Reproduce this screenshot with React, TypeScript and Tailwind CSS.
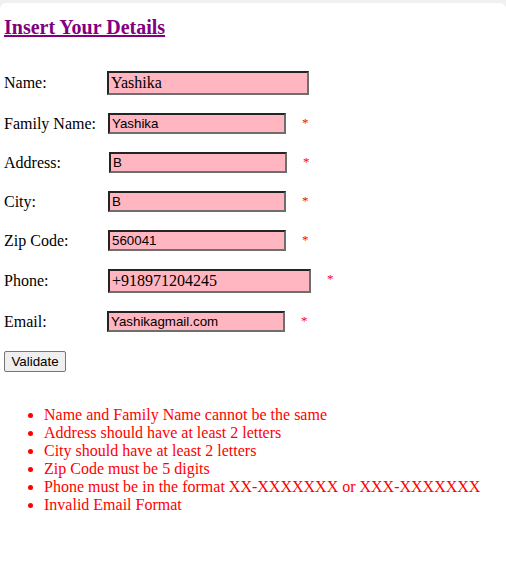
const fields = [
  { label: "Name:", value: "Yashika", serif: true, width: "w-[202px]", shift: "ml-0", star: false },
  { label: "Family Name:", value: "Yashika", serif: false, width: "w-[178px]", shift: "ml-[1px]", star: true },
  { label: "Address:", value: "B", serif: false, width: "w-[178px]", shift: "ml-[2px]", star: true },
  { label: "City:", value: "B", serif: false, width: "w-[178px]", shift: "ml-[1px]", star: true },
  { label: "Zip Code:", value: "560041", serif: false, width: "w-[178px]", shift: "ml-[1px]", star: true },
  { label: "Phone:", value: "+918971204245", serif: true, width: "w-[203px]", shift: "ml-[1px]", star: true },
  { label: "Email:", value: "Yashikagmail.com", serif: false, width: "w-[178px]", shift: "ml-0", star: true },
];

const errors = [
  "Name and Family Name cannot be the same",
  "Address should have at least 2 letters",
  "City should have at least 2 letters",
  "Zip Code must be 5 digits",
  "Phone must be in the format XX-XXXXXXX or XXX-XXXXXXX",
  "Invalid Email Format",
];

const App = () => {
  return (
    <div className="min-h-[561px] bg-[#f0f0f0] pt-[3px] font-['Liberation_Serif',serif]">
      <div className="min-h-[558px] rounded-t-[6px] bg-white pl-[4px] pt-[13px]">
        <h3 className="text-[20px] font-bold leading-[23px] text-[#800080] underline">
          Insert Your Details
        </h3>

        <form className="mt-[32px] flex flex-col gap-[18px]" onSubmit={(e) => e.preventDefault()}>
          {fields.map((f) => (
            <div key={f.label} className="flex items-center">
              <label className="w-[103px] text-[16px] leading-[18px] text-black">{f.label}</label>
              <input
                type="text"
                defaultValue={f.value}
                className={`${f.shift} ${f.width} ${
                  f.serif
                    ? "h-[24px] font-['Liberation_Serif',serif] text-[16px]"
                    : "h-[21px] font-['Liberation_Sans',Arial,sans-serif] text-[13.33px]"
                } border-2 border-t-[#242424] border-l-[#242424] border-r-[#6e6e6e] border-b-[#6e6e6e] bg-[#ffb6c1] px-[2px] py-[1px] text-black outline-none`}
              />
              {f.star && (
                <span className="ml-[16px] self-start mt-[3px] text-[13px] leading-none text-[#ff0000]">*</span>
              )}
            </div>
          ))}
          <div className="-mt-[1px]">
            <button
              type="submit"
              className="h-[21px] w-[62px] rounded-[2px] border border-[#767676] bg-[#efefef] px-[6px] font-['Liberation_Sans',Arial,sans-serif] text-[13.33px] leading-[15px] text-black"
            >
              Validate
            </button>
          </div>
        </form>

        <ul className="mt-[33px] list-disc pl-[40px] text-[16px] leading-[18px] text-[#ff0000]">
          {errors.map((msg) => (
            <li key={msg}>{msg}</li>
          ))}
        </ul>
      </div>
    </div>
  );
};

export default App;
